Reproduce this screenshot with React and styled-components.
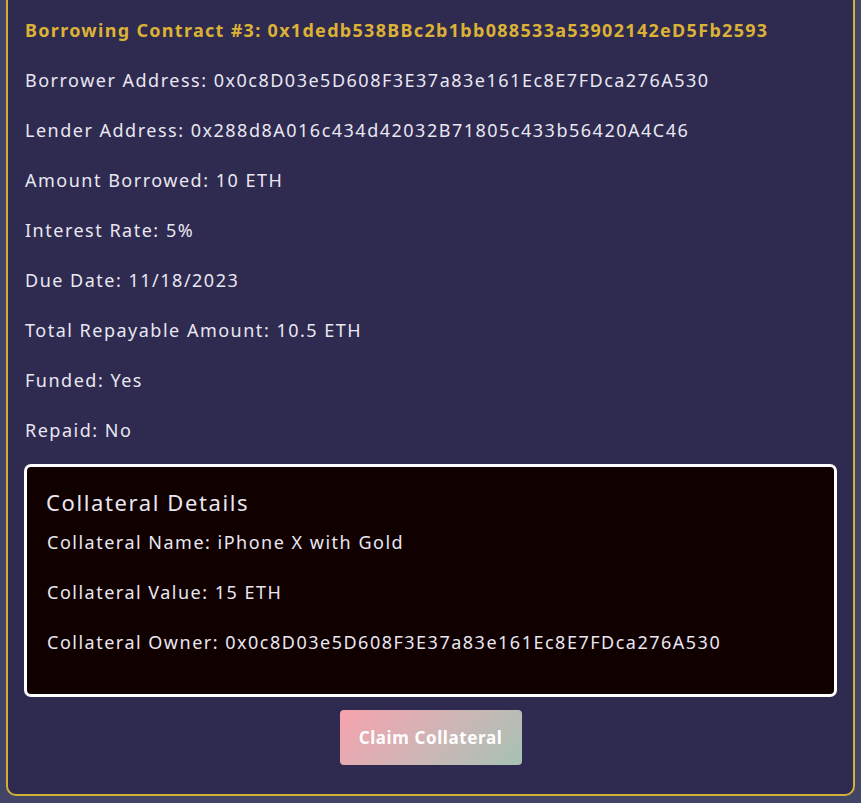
import React from "react"
import styled, { createGlobalStyle } from "styled-components"

const GlobalStyle = createGlobalStyle`
  html, body {
    margin: 0;
    padding: 0;
    background: #434566;
    overflow: hidden;
  }
  body {
    font-family: "Comic Sans MS", "Noto Sans", sans-serif;
  }
`

const contract = {
  id: 3,
  address: "0x1dedb538BBc2b1bb088533a53902142eD5Fb2593",
  borrower: "0x0c8D03e5D608F3E37a83e161Ec8E7FDca276A530",
  lender: "0x288d8A016c434d42032B71805c433b56420A4C46",
  amount: "10 ETH",
  rate: "5%",
  dueDate: "11/18/2023",
  total: "10.5 ETH",
  funded: true,
  repaid: false,
  collateral: {
    name: "iPhone X with Gold",
    value: "15 ETH",
    owner: "0x0c8D03e5D608F3E37a83e161Ec8E7FDca276A530"
  }
}

export default function App() {
  const c = contract
  const fields = [
    ["Borrower Address", c.borrower],
    ["Lender Address", c.lender],
    ["Amount Borrowed", c.amount],
    ["Interest Rate", c.rate],
    ["Due Date", c.dueDate],
    ["Total Repayable Amount", c.total],
    ["Funded", c.funded ? "Yes" : "No"],
    ["Repaid", c.repaid ? "Yes" : "No"]
  ]
  return (
    <Page>
      <GlobalStyle />
      <Card>
        <Title>Borrowing Contract #{c.id}: {c.address}</Title>
        <FieldList>
          {fields.map(([label, value]) => (
            <Field key={label}>{label}: {value}</Field>
          ))}
        </FieldList>
        <CollateralBox>
          <CollateralHeading>Collateral Details</CollateralHeading>
          <FieldList>
            <Field>Collateral Name: {c.collateral.name}</Field>
            <Field>Collateral Value: {c.collateral.value}</Field>
            <Field>Collateral Owner: {c.collateral.owner}</Field>
          </FieldList>
        </CollateralBox>
        <Actions>
          <ClaimButton>Claim Collateral</ClaimButton>
        </Actions>
      </Card>
    </Page>
  )
}

const Page = styled.div`
  padding: 0 6px 7px;
`

const Card = styled.div`
  margin-top: -20px;
  border: 2px solid #d4af37;
  border-radius: 10px;
  background: #2e2a50;
  padding: 36px 16px 29px;
  color: #e9e7f1;
`

const Title = styled.h2`
  margin: 0 0 26px;
  font-size: 18px;
  line-height: 24px;
  font-weight: 700;
  letter-spacing: 1.3px;
  color: #dcb236;
  padding-left: 1px;
  white-space: nowrap;
`

const FieldList = styled.div`
  display: flex;
  flex-direction: column;
  gap: 26px;
`

const Field = styled.p`
  margin: 0;
  font-size: 18px;
  line-height: 24px;
  letter-spacing: 1.5px;
  padding-left: 1px;
  white-space: nowrap;
`

const CollateralBox = styled.div`
  margin-top: 22px;
  border: 3px solid #ffffff;
  border-radius: 7px;
  background: #100000;
  padding: 21px 19px 40px;
`

const CollateralHeading = styled.h3`
  margin: 0 0 14px;
  font-size: 22px;
  line-height: 28px;
  font-weight: 400;
  letter-spacing: 1.6px;
`

const Actions = styled.div`
  display: flex;
  justify-content: center;
  margin-top: 13px;
`

const ClaimButton = styled.button`
  width: 182px;
  height: 55px;
  border: none;
  border-radius: 4px;
  background: linear-gradient(135deg, #f7a2ad 0%, #ccb6b6 55%, #a6c2b4 100%);
  color: #ffffff;
  font-family: inherit;
  font-size: 17px;
  font-weight: 700;
  letter-spacing: 0.6px;
  cursor: pointer;
`
